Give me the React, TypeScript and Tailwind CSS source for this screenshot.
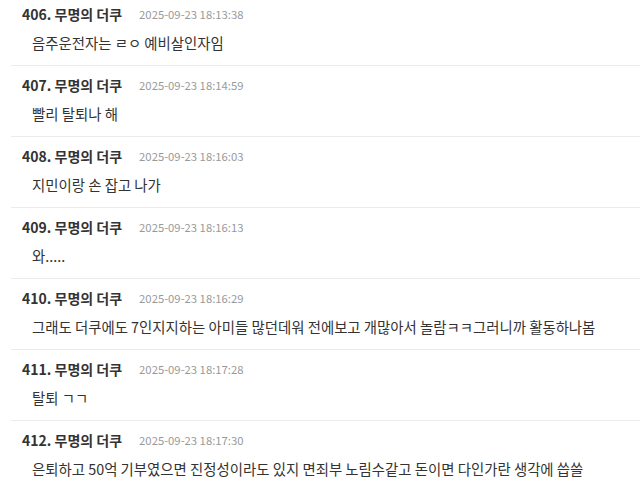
const comments = [
  { no: 406, time: "2025-09-23 18:13:38", text: "음주운전자는 ㄹㅇ 예비살인자임" },
  { no: 407, time: "2025-09-23 18:14:59", text: "빨리 탈퇴나 해" },
  { no: 408, time: "2025-09-23 18:16:03", text: "지민이랑 손 잡고 나가" },
  { no: 409, time: "2025-09-23 18:16:13", text: "와....." },
  {
    no: 410,
    time: "2025-09-23 18:16:29",
    text: "그래도 더쿠에도 7인지지하는 아미들 많던데워 전에보고 개많아서 놀람ㅋㅋ그러니까 활동하나봄",
  },
  { no: 411, time: "2025-09-23 18:17:28", text: "탈퇴 ㄱㄱ" },
  {
    no: 412,
    time: "2025-09-23 18:17:30",
    text: "은퇴하고 50억 기부였으면 진정성이라도 있지 면죄부 노림수같고 돈이면 다인가란 생각에 씁쓸",
  },
];

export default function App() {
  return (
    <div
      className="w-[640px] h-[484px] overflow-hidden bg-white text-[#333]"
      style={{ fontFamily: '"Noto Sans CJK KR", "Noto Sans", sans-serif' }}
    >
      <div className="ml-[11px]">
        {comments.map((c, i) => (
          <div
            key={c.no}
            className={i === 0 ? "pt-[5px] pb-[12px]" : "border-t border-[#ebebeb] pt-[10px] pb-[12px]"}
          >
            <div className="pl-[11px] h-[18px] flex items-center whitespace-nowrap">
              <span className="text-[14px] font-bold text-[#333]">{c.no}. 무명의 더쿠</span>
              <span className="ml-[17px] text-[11.3px] text-[#999]">{c.time}</span>
            </div>
            <div className="mt-[10px] pl-[21px] h-[20px] flex items-center text-[14.4px] text-[#333] whitespace-nowrap">
              {c.text}
            </div>
          </div>
        ))}
      </div>
    </div>
  );
}
